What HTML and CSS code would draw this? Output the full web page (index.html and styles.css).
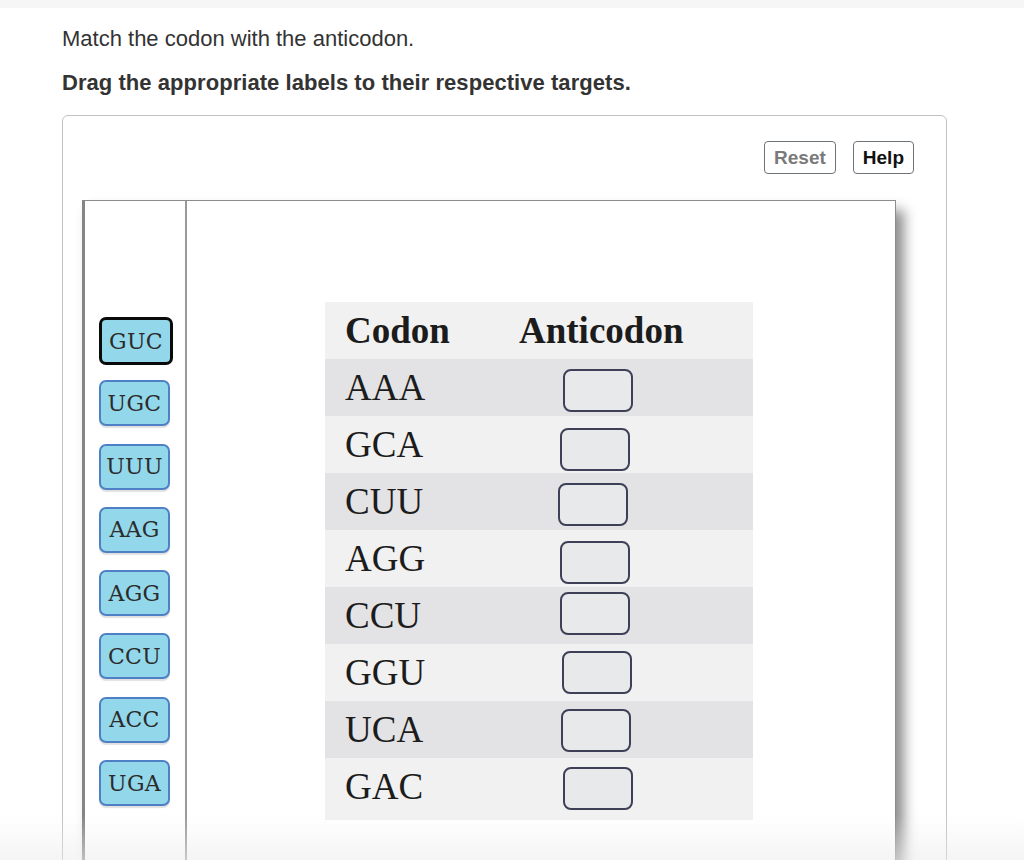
FILE: index.html
```html
<!DOCTYPE html>
<html lang="en">
<head>
<meta charset="utf-8">
<title>Match the codon with the anticodon</title>
<link rel="stylesheet" href="styles.css">
</head>
<body>
<div class="topbar"></div>
<main class="page">
  <p class="prompt">Match the codon with the anticodon.</p>
  <p class="instruction">Drag the appropriate labels to their respective targets.</p>
  <section class="panel">
    <div class="toolbar">
      <button class="btn btn-reset">Reset</button>
      <button class="btn btn-help">Help</button>
    </div>
    <div class="canvas">
      <div class="bank">
        <div class="label selected">GUC</div>
        <div class="label">UGC</div>
        <div class="label">UUU</div>
        <div class="label">AAG</div>
        <div class="label">AGG</div>
        <div class="label">CCU</div>
        <div class="label">ACC</div>
        <div class="label">UGA</div>
      </div>
      <div class="board">
        <div class="codon-table">
          <div class="row head"><div class="c1">Codon</div><div class="c2">Anticodon</div></div>
          <div class="row odd"><div class="c1">AAA</div><div class="c2"><div class="target t1"></div></div></div>
          <div class="row"><div class="c1">GCA</div><div class="c2"><div class="target t2"></div></div></div>
          <div class="row odd"><div class="c1">CUU</div><div class="c2"><div class="target t3"></div></div></div>
          <div class="row"><div class="c1">AGG</div><div class="c2"><div class="target t4"></div></div></div>
          <div class="row odd"><div class="c1">CCU</div><div class="c2"><div class="target t5"></div></div></div>
          <div class="row"><div class="c1">GGU</div><div class="c2"><div class="target t6"></div></div></div>
          <div class="row odd"><div class="c1">UCA</div><div class="c2"><div class="target t7"></div></div></div>
          <div class="row last"><div class="c1">GAC</div><div class="c2"><div class="target t8"></div></div></div>
        </div>
      </div>
    </div>
  </section>
</main>
<div class="bottom-fade"></div>
</body>
</html>
```
FILE: styles.css
```css
html, body {
  margin: 0;
  padding: 0;
  overflow: hidden;
  background: #ffffff;
  height: 860px;
}
body {
  font-family: "Liberation Sans", Arial, sans-serif;
  color: #333333;
}
.topbar {
  height: 8px;
  background: #f6f6f6;
}
.page {
  padding-left: 62px;
  width: 885px;
}
.prompt {
  margin: 18px 0 0 0;
  font-size: 22px;
  line-height: 26px;
}
.instruction {
  margin: 18px 0 0 0;
  font-size: 22px;
  line-height: 26px;
  font-weight: bold;
  letter-spacing: 0.05px;
}
.panel {
  margin-top: 19px;
  border: 1px solid #c2c2c2;
  border-radius: 6px;
  height: 800px;
  box-sizing: border-box;
}
.toolbar {
  display: flex;
  justify-content: flex-end;
  gap: 17px;
  padding: 25px 32px 0 0;
}
.btn {
  height: 33px;
  padding: 0 9px;
  background: #ffffff;
  border: 1px solid #6f747b;
  border-radius: 4px;
  font-family: "Liberation Sans", Arial, sans-serif;
  font-weight: bold;
  font-size: 19px;
  line-height: 31px;
}
.btn-reset { color: #7a7a7a; }
.btn-help { color: #111111; }

.canvas {
  margin: 26px 0 0 19px;
  width: 814px;
  height: 700px;
  box-sizing: border-box;
  border-top: 1px solid #8c8c8c;
  border-left: 3px solid #858585;
  border-right: 1px solid #8c8c8c;
  display: flex;
  box-shadow: 8px 10px 12px rgba(0, 0, 0, 0.45);
  background: #ffffff;
}
.bank {
  width: 86px;
  flex: none;
  border-right: 2px solid #9a9a9a;
  padding: 116px 0 0 14px;
  display: flex;
  flex-direction: column;
  align-items: flex-start;
}
.label {
  width: 71px;
  height: 46px;
  box-sizing: border-box;
  margin-bottom: 17.3px;
  background: #93d8ea;
  border: 2px solid #4f80c6;
  border-radius: 7px;
  box-shadow: 0 2px 1px rgba(0, 0, 0, 0.12);
  font-family: "DejaVu Serif", "Liberation Serif", serif;
  font-size: 22px;
  letter-spacing: 0.3px;
  color: #2b2b2b;
  display: flex;
  align-items: center;
  justify-content: center;
}
.label.selected {
  width: 74px;
  height: 48px;
  margin-bottom: 15.3px;
  border: 3px solid #0a0a0a;
  box-shadow: none;
}
.board {
  flex: 1;
  padding: 101px 0 0 138px;
}
.codon-table {
  width: 428px;
  background: #f1f1f1;
  padding-bottom: 5px;
  font-family: "Liberation Serif", "Times New Roman", serif;
  font-size: 37px;
  color: #1c1c1c;
}
.row {
  display: grid;
  grid-template-columns: 194px 1fr;
  height: 57px;
  align-items: start;
}
.row.odd { background: #e3e3e5; }
.row.head { font-weight: bold; }
.c1 {
  padding-left: 20px;
  line-height: 57px;
}
.c2 {
  line-height: 57px;
  min-height: 57px;
}
.target {
  width: 70px;
  height: 43px;
  box-sizing: border-box;
  margin: 9px 0 0 42px;
  border: 2px solid #3d4056;
  border-radius: 8px;
  background: #e8e9eb;
}
.t1 { margin-left: 44px; margin-top: 10px; }
.t2 { margin-left: 41px; margin-top: 12px; }
.t3 { margin-left: 39px; margin-top: 10px; }
.t4 { margin-left: 41px; margin-top: 11px; }
.t5 { margin-left: 41px; margin-top: 5px; }
.t6 { margin-left: 43px; margin-top: 7px; }
.t7 { margin-left: 42px; margin-top: 8px; }
.t8 { margin-left: 44px; margin-top: 9px; }

.bottom-fade {
  position: fixed;
  left: 0;
  right: 0;
  bottom: 0;
  height: 45px;
  background: linear-gradient(rgba(255, 255, 255, 0), rgba(236, 236, 236, 0.55));
  pointer-events: none;
}
```
